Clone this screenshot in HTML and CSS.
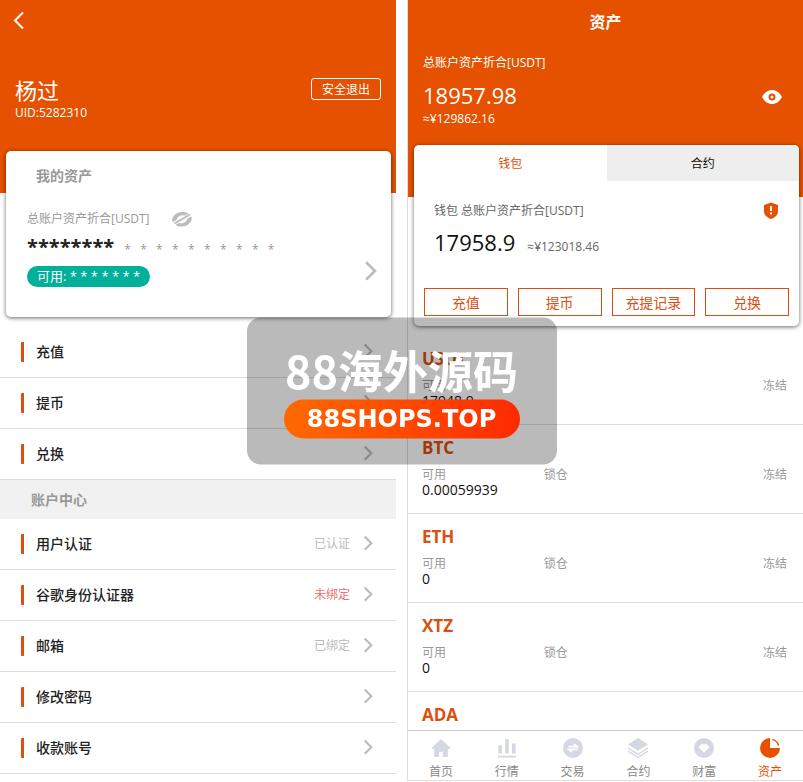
FILE: index.html
```html
<!DOCTYPE html>
<html lang="zh-CN">
<head>
    <meta charset="UTF-8">
    <meta name="viewport" content="width=device-width, initial-scale=1.0">
    <title>资产</title>
    <link rel="stylesheet" href="styles.css">
</head>
<body>
    <svg class="sprite" aria-hidden="true">
        <symbol id="arrow" viewBox="0 0 12 20">
            <path d="M2 1l8 8-8 8" fill="none" stroke="currentColor" stroke-width="2.500"/>
        </symbol>
    </svg>

    <div class="screens">
        <!-- 个人中心 -->
        <section class="screen account">
            <header class="account-head">
                <a href="#" class="back" aria-label="返回">
                    <svg width="12" height="20" viewBox="0 0 12 20"><path d="M10 1.500L2 9.500l8 8" fill="none" stroke="currentColor" stroke-width="2"/></svg>
                </a>
                <div class="user">
                    <div>
                        <h1 class="user-name">杨过</h1>
                        <p class="user-id">UID:5282310</p>
                    </div>
                    <button class="logout" type="button">安全退出</button>
                </div>
            </header>

            <div class="card my-assets">
                <h2 class="my-title">我的资产</h2>
                <div class="my-label">
                    <span>总账户资产折合[USDT]</span>
                    <button class="icon-btn" type="button" aria-label="显示资产">
                        <svg width="22" height="18" viewBox="0 0 22 18">
                            <path d="M1 10C2 5 6 2 11.500 2c2.500 0 4.500.5 6 1.500L14 5.500c-4-1-7.500.5-8.500 4.500L2 12z" fill="#b9bbbf"/>
                            <path d="M21 8c-1 5-5 8.500-10.500 8.500-2.500 0-4.500-.5-6-1.500L8 13c4 1 7.500-.5 8.500-4.500L20 6.500z" fill="#b9bbbf"/>
                            <path d="M3.500 13.500L19 4.500" stroke="#b9bbbf" stroke-width="2"/>
                        </svg>
                    </button>
                </div>
                <div class="my-row">
                    <div>
                        <div class="hidden-total"><b>********</b><span>*   *   *   *   *   *   *   *   *   *</span></div>
                        <div class="usable">可用: * * * * * * *</div>
                    </div>
                    <svg class="arrow arrow-big"><use href="#arrow"/></svg>
                </div>
            </div>

            <nav class="menu">
                <a href="#" class="menu-item"><span class="menu-name">充值</span><svg class="arrow"><use href="#arrow"/></svg></a>
                <a href="#" class="menu-item"><span class="menu-name">提币</span><svg class="arrow"><use href="#arrow"/></svg></a>
                <a href="#" class="menu-item"><span class="menu-name">兑换</span><svg class="arrow"><use href="#arrow"/></svg></a>
            </nav>
            <h2 class="menu-title">账户中心</h2>
            <nav class="menu">
                <a href="#" class="menu-item"><span class="menu-name">用户认证</span><span class="state">已认证</span><svg class="arrow"><use href="#arrow"/></svg></a>
                <a href="#" class="menu-item"><span class="menu-name">谷歌身份认证器</span><span class="state warn">未绑定</span><svg class="arrow"><use href="#arrow"/></svg></a>
                <a href="#" class="menu-item"><span class="menu-name">邮箱</span><span class="state">已绑定</span><svg class="arrow"><use href="#arrow"/></svg></a>
                <a href="#" class="menu-item"><span class="menu-name">修改密码</span><svg class="arrow"><use href="#arrow"/></svg></a>
                <a href="#" class="menu-item"><span class="menu-name">收款账号</span><svg class="arrow"><use href="#arrow"/></svg></a>
            </nav>
        </section>

        <!-- 资产 -->
        <section class="screen wallet">
            <header class="wallet-head">
                <h1 class="wallet-title">资产</h1>
                <p class="wallet-label">总账户资产折合[USDT]</p>
                <div class="wallet-total">
                    <div>
                        <div class="amount">18957.98</div>
                        <p class="wallet-cny">≈¥129862.16</p>
                    </div>
                    <button class="icon-btn" type="button" aria-label="隐藏资产">
                        <svg width="20" height="16" viewBox="0 0 20 16">
                            <path d="M0 8C3 3 6 1 10 1s7 2 10 7c-3 5-6 7-10 7S3 13 0 8z" fill="#fff"/>
                            <circle cx="10" cy="8" r="2.500" fill="#fff" stroke="#e65100" stroke-width="2"/>
                        </svg>
                    </button>
                </div>
            </header>

            <div class="card wallet-card">
                <div class="tabs">
                    <button class="tab active" type="button">钱包</button>
                    <button class="tab" type="button">合约</button>
                </div>
                <div class="wallet-info">
                    <div class="info-top">
                        <span>钱包 总账户资产折合[USDT]</span>
                        <svg width="16" height="18" viewBox="0 0 16 18">
                            <path d="M8 .5l7 2.500v6c0 4-3 6.500-7 8-4-1.500-7-4-7-8V3z" fill="#e65100"/>
                            <path d="M8 4v5M8 10.500v2" stroke="#fff" stroke-width="2"/>
                        </svg>
                    </div>
                    <div class="info-total"><span class="amount">17958.9</span><span>≈¥123018.46</span></div>
                </div>
                <div class="actions">
                    <button type="button">充值</button>
                    <button type="button">提币</button>
                    <button type="button">充提记录</button>
                    <button type="button">兑换</button>
                </div>
            </div>

            <div class="coins">
                <div class="coin">
                    <h3>USDT</h3>
                    <div class="coin-row"><div>可用<b>17948.9</b></div><div></div><div>冻结</div></div>
                </div>
                <div class="coin">
                    <h3>BTC</h3>
                    <div class="coin-row"><div>可用<b>0.00059939</b></div><div>锁仓</div><div>冻结</div></div>
                </div>
                <div class="coin">
                    <h3>ETH</h3>
                    <div class="coin-row"><div>可用<b>0</b></div><div>锁仓</div><div>冻结</div></div>
                </div>
                <div class="coin">
                    <h3>XTZ</h3>
                    <div class="coin-row"><div>可用<b>0</b></div><div>锁仓</div><div>冻结</div></div>
                </div>
                <div class="coin">
                    <h3>ADA</h3>
                </div>
            </div>

            <nav class="tabbar">
                <a href="#">
                    <svg viewBox="0 0 22 22"><path d="M11 1L1 10.500c-.5.8 0 1.500 1 1.500h1.500v9H9v-6h4v6h5.500v-9H20c1 0 1.500-.7 1-1.500z" fill="currentColor"/></svg>
                    首页
                </a>
                <a href="#">
                    <svg viewBox="0 0 22 22"><path d="M3.500 8v9M11 1v16M18.500 6v11" stroke="currentColor" stroke-width="4"/><path d="M1 20.500h20" stroke="currentColor" stroke-width="2"/></svg>
                    行情
                </a>
                <a href="#">
                    <svg viewBox="0 0 22 22"><circle cx="11" cy="11" r="11" fill="currentColor"/><path d="M6 9.500h9.500L12 6.500M16 12.500H6.500l3.500 3" fill="none" stroke="#fff" stroke-width="2"/></svg>
                    交易
                </a>
                <a href="#">
                    <svg viewBox="0 0 22 22"><path d="M11 0l11 7-11 7L0 7z" fill="currentColor"/><path d="M0 11l11 7 11-7M0 14.500l11 7 11-7" fill="none" stroke="currentColor" stroke-width="1.500"/></svg>
                    合约
                </a>
                <a href="#">
                    <svg viewBox="0 0 22 22"><circle cx="11" cy="11" r="11" fill="currentColor"/><path d="M8 7h6l3 3.500-6 5.500-6-5.500z" fill="#fff"/></svg>
                    财富
                </a>
                <a href="#" class="current">
                    <svg viewBox="0 0 22 22"><path d="M11 0v11h11A11 11 0 1 1 11 0z" fill="currentColor"/><path d="M13.500 1.500A9.500 9.500 0 0 1 20.500 8.500" fill="none" stroke="currentColor" stroke-width="1.500"/></svg>
                    资产
                </a>
            </nav>
        </section>
    </div>

    <div class="mark">
        <div class="mark-name">88海外源码</div>
        <div class="mark-site">88SHOPS.TOP</div>
    </div>
</body>
</html>
```
FILE: styles.css
```css
* {
    box-sizing: border-box;
}
body {
    margin: 0;
    font-family: "Open Sans", "Noto Sans CJK SC", sans-serif;
    font-size: 12px;
    line-height: 16px;
    color: #111;
    background-color: #fff;
}
h1, h2, h3, p {
    margin: 0;
}
a {
    color: inherit;
    text-decoration: none;
}
button {
    font-family: inherit;
    font-size: 12px;
    padding: 0;
    cursor: pointer;
}
.sprite {
    display: none;
}
.screens {
    display: grid;
    grid-template-columns: 1fr 1fr;
    gap: 11px;
    height: 100vh;
    overflow: hidden;
}
.card {
    background-color: #fff;
    border-radius: 5px;
    box-shadow: 0 1px 4px rgba(0, 0, 0, 0.6);
}
.icon-btn {
    display: flex;
    border: none;
    background: none;
}
.amount {
    font-size: 22px;
    line-height: 32px;
}
.arrow {
    width: 10px;
    height: 18px;
    color: #bbb;
}

/* 个人中心 */
.account-head {
    height: 193px;
    padding: 11px 15px 0 13px;
    background-color: #e65100;
    color: #fff;
}
.back {
    display: flex;
    margin-bottom: 44px;
}
.user {
    display: flex;
    justify-content: space-between;
    align-items: flex-start;
    padding-left: 2px;
}
.user-name {
    font-size: 22px;
    font-weight: normal;
    line-height: 30px;
}
.logout {
    width: 70px;
    height: 22px;
    margin-top: 3px;
    border: 1px solid #fff;
    border-radius: 3px;
    background: none;
    color: #fff;
}
.my-assets {
    margin: -42px 5px 10px 6px;
    height: 166px;
    padding: 15px 14px 0 21px;
    color: #999;
}
.my-title {
    padding-left: 9px;
    font-size: 14px;
    line-height: 20px;
}
.my-label {
    display: flex;
    align-items: center;
    gap: 21px;
    margin-top: 24px;
}
.my-row {
    display: flex;
    justify-content: space-between;
    align-items: flex-end;
}
.hidden-total {
    display: flex;
    align-items: center;
    gap: 10px;
    height: 38px;
    white-space: pre;
}
.hidden-total b {
    font-size: 20px;
    color: #222;
}
.hidden-total span {
    padding-top: 5px;
}
.usable {
    display: inline-block;
    padding: 0 10px;
    border-radius: 11px;
    background-color: #00b098;
    color: #fff;
    font-size: 13px;
    line-height: 21px;
}
.arrow-big {
    width: 13px;
    height: 24px;
    margin-bottom: 3px;
}
.menu-item {
    display: flex;
    align-items: center;
    gap: 13px;
    height: 51px;
    padding: 0 23px 0 21px;
    border-bottom: 1px solid #ddd;
}
.menu-name {
    flex: 1;
    padding-left: 12px;
    border-left: 3px solid #dd4f10;
    border-radius: 1px;
    font-size: 14px;
    font-weight: 500;
    line-height: 20px;
    color: #222;
}
.state {
    color: #bbb;
}
.state.warn {
    color: #e57373;
}
.menu-title {
    padding-left: 31px;
    background-color: #f1f1f1;
    color: #999;
    font-size: 14px;
    line-height: 39px;
}

/* 资产 */
.wallet {
    display: flex;
    flex-direction: column;
    min-height: 0;
    margin-bottom: 1px;
    border-left: 1px solid #ddd;
    border-bottom: 1px solid #ddd;
}
.wallet-head {
    flex: none;
    height: 197px;
    padding: 10px 21px 0 15px;
    background-color: #e65100;
    color: #fff;
}
.wallet-title {
    padding-left: 6px;
    margin-bottom: 21px;
    font-size: 16px;
    line-height: 24px;
    text-align: center;
}
.wallet-total {
    display: flex;
    justify-content: space-between;
    align-items: center;
    padding-top: 8px;
}
.wallet-total .icon-btn {
    margin-bottom: 12px;
}
.wallet-card {
    margin: -52px 4px 10px 6px;
}
.tabs {
    display: flex;
}
.tab {
    flex: 1;
    height: 36px;
    border: none;
    border-radius: 0 5px 0 0;
    background-color: #eee;
    color: #111;
}
.tab.active {
    background: none;
    color: #dd4f10;
}
.wallet-info {
    padding: 20px 20px 30px;
    color: #666;
}
.info-top {
    display: flex;
    justify-content: space-between;
    align-items: center;
    height: 20px;
}
.info-total {
    display: flex;
    align-items: baseline;
    gap: 12px;
    padding-top: 5px;
}
.info-total .amount {
    color: #111;
}
.actions {
    display: grid;
    grid-template-columns: repeat(4, 1fr);
    gap: 10px;
    padding: 0 10px 10px;
}
.actions button {
    height: 28px;
    border: 1px solid #dd4f10;
    background: none;
    color: #dd4f10;
    font-size: 14px;
}
.coins {
    flex: 1;
    min-height: 0;
    overflow: hidden;
}
.coin {
    height: 89px;
    padding: 11px 16px 0 14px;
    border-bottom: 1px solid #ddd;
}
.coin h3 {
    margin-bottom: 7px;
    font-size: 17px;
    line-height: 24px;
    color: #dd4f10;
}
.coin-row {
    display: grid;
    grid-template-columns: 1fr 1fr 1fr;
    color: #999;
}
.coin-row div:last-child {
    text-align: right;
}
.coin-row b {
    display: block;
    font-size: 14px;
    font-weight: normal;
    line-height: 14px;
    color: #111;
}
.tabbar {
    display: grid;
    grid-template-columns: repeat(6, 1fr);
    height: 50px;
    border-top: 1px solid #ccc;
    color: #888;
    text-align: center;
}
.tabbar a {
    display: flex;
    flex-direction: column;
    align-items: center;
    gap: 6px;
    padding-top: 7px;
}
.tabbar svg {
    width: 20px;
    height: 20px;
    color: #d5d7e3;
}
.tabbar .current, .tabbar .current svg {
    color: #e65100;
}

/* 水印 */
.mark {
    position: fixed;
    top: 50%;
    left: 50%;
    transform: translate(-50%, -50%);
    width: 310px;
    padding: 26px 37px;
    border-radius: 14px;
    background-color: rgba(0, 0, 0, 0.27);
    color: #fff;
    font-weight: bold;
    text-align: center;
    white-space: nowrap;
}
.mark-name {
    margin-bottom: 4px;
    font-family: "Noto Sans CJK SC", sans-serif;
    font-size: 45px;
    line-height: 52px;
}
.mark-site {
    border-radius: 20px;
    background-image: linear-gradient(90deg, #ff6a00, #ff2a00);
    font-family: "DejaVu Sans", sans-serif;
    font-size: 24px;
    line-height: 39px;
}
```
